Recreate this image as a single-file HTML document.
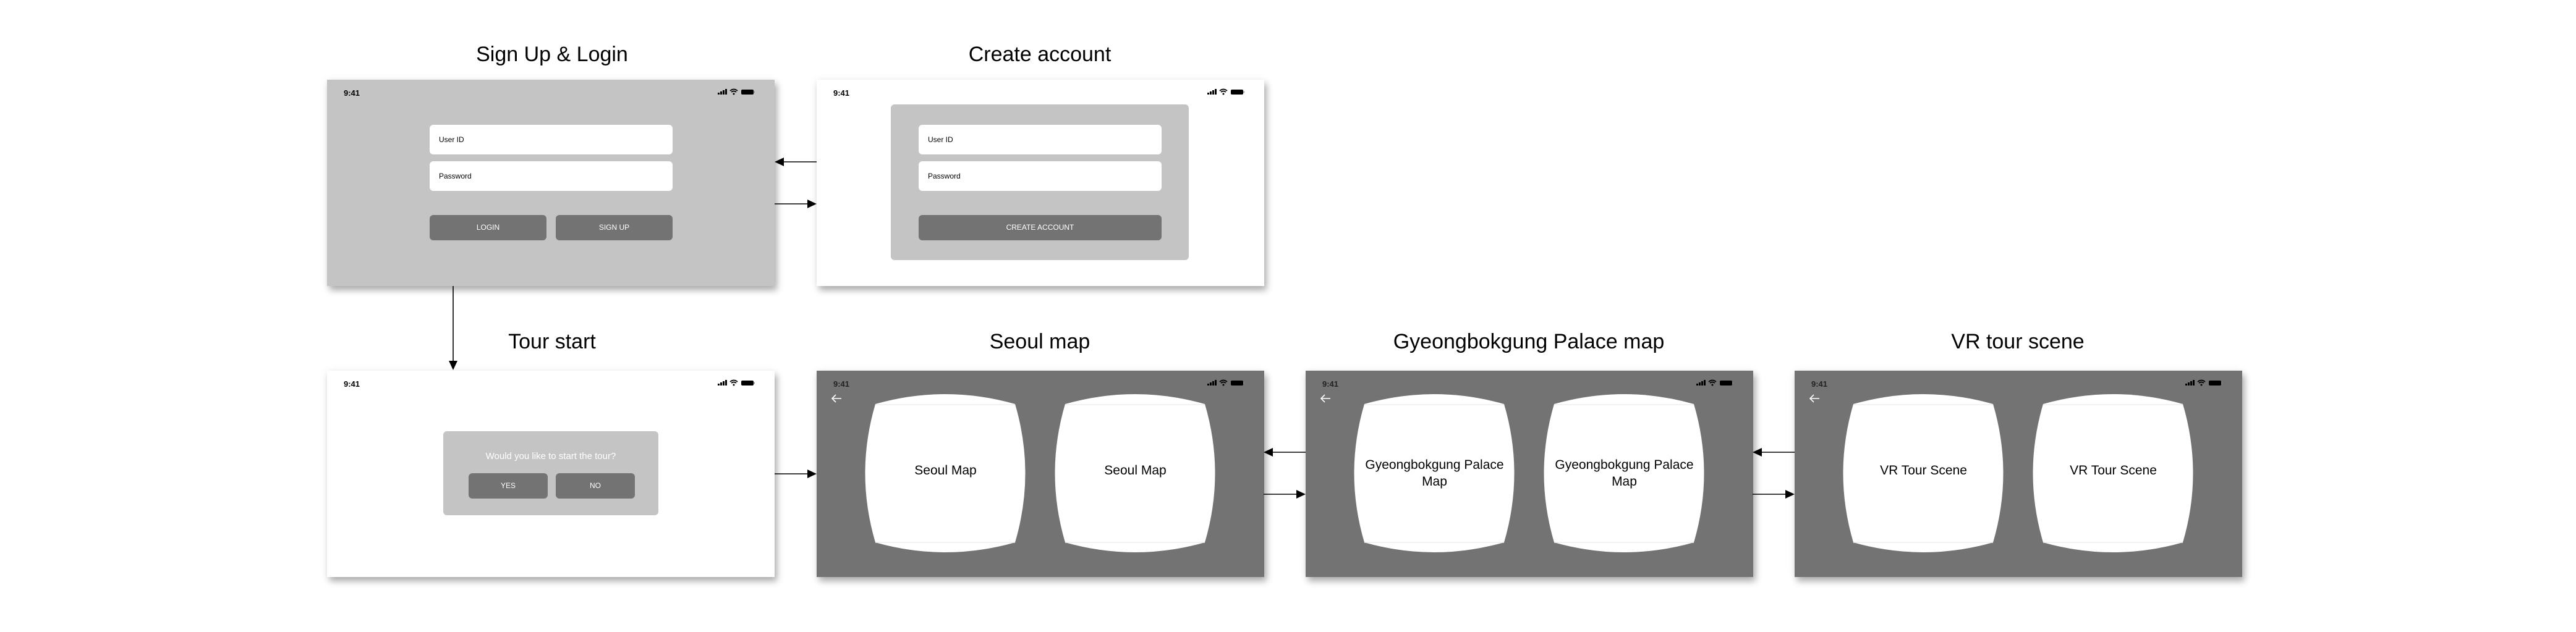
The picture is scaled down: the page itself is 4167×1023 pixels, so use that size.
<!DOCTYPE html>
<html><head><meta charset="utf-8">
<style>
*{margin:0;padding:0;box-sizing:border-box}
body{width:4167px;height:1023px;background:#fff;position:relative;overflow:hidden;font-family:"Liberation Sans",Arial,sans-serif;color:#000}
.t{position:absolute;font-size:34px;text-align:center;width:800px;line-height:40px}
.f{position:absolute;width:724px;height:334px;box-shadow:4px 7px 10px rgba(0,0,0,.3),0 0 14px rgba(0,0,0,.06)}
.g{background:#c4c4c4}.w{background:#fff}.d{background:#737373}
.tm{position:absolute;left:27px;top:14px;font-size:13px;font-weight:bold}
.d .tm{color:#222}
.ic{position:absolute;left:632px;top:14px}
.in{position:absolute;background:#fff;border-radius:6px;height:48px;width:393px;font-size:12px;padding-left:15px;line-height:48px}
.b{position:absolute;background:#737373;border-radius:6px;height:41px;color:#fff;font-size:12px;text-align:center;line-height:41px}
.lt{position:absolute;top:0;left:0}
.lx{position:absolute;width:257px;font-size:21px;text-align:center;line-height:27px}
</style></head><body>

<div class="t" style="left:493px;top:68px">Sign Up &amp; Login</div>
<div class="t" style="left:1282px;top:68px">Create account</div>
<div class="t" style="left:493px;top:533px">Tour start</div>
<div class="t" style="left:1282px;top:533px">Seoul map</div>
<div class="t" style="left:2073px;top:533px">Gyeongbokgung Palace map</div>
<div class="t" style="left:2864px;top:533px">VR tour scene</div>

<!-- Frame 1 -->
<div class="f g" style="left:529px;top:129px">
 <div class="tm">9:41</div>
 <svg class="ic" width="62" height="12" viewBox="0 0 62 12"><rect x="0" y="7" width="3" height="3" fill="#000"/><rect x="4" y="5" width="3" height="5"/><rect x="8" y="3" width="3" height="7"/><rect x="12" y="1" width="3" height="9"/><path d="M20 4 Q26 -1 32 4 M22 6 Q26 3 30 6" stroke="#000" stroke-width="1.8" fill="none"/><circle cx="26" cy="9" r="1.5"/><rect x="38" y="2" width="20" height="8" rx="2"/><rect x="58.5" y="4.5" width="1.5" height="3" fill="#888"/></svg>
 <div class="in" style="left:166px;top:73px">User ID</div>
 <div class="in" style="left:166px;top:132px">Password</div>
 <div class="b" style="left:166px;top:219px;width:189px">LOGIN</div>
 <div class="b" style="left:370px;top:219px;width:189px">SIGN UP</div>
</div>

<!-- Frame 2 -->
<div class="f w" style="left:1321px;top:129px">
 <div class="tm">9:41</div>
 <svg class="ic" width="62" height="12" viewBox="0 0 62 12"><rect x="0" y="7" width="3" height="3"/><rect x="4" y="5" width="3" height="5"/><rect x="8" y="3" width="3" height="7"/><rect x="12" y="1" width="3" height="9"/><path d="M20 4 Q26 -1 32 4 M22 6 Q26 3 30 6" stroke="#000" stroke-width="1.8" fill="none"/><circle cx="26" cy="9" r="1.5"/><rect x="38" y="2" width="20" height="8" rx="2"/><rect x="58.5" y="4.5" width="1.5" height="3" fill="#888"/></svg>
 <div style="position:absolute;left:120px;top:40px;width:482px;height:252px;background:#c4c4c4;border-radius:6px"></div>
 <div class="in" style="left:165px;top:73px">User ID</div>
 <div class="in" style="left:165px;top:132px">Password</div>
 <div class="b" style="left:165px;top:219px;width:393px">CREATE ACCOUNT</div>
</div>

<!-- Frame 3 -->
<div class="f w" style="left:529px;top:600px">
 <div class="tm">9:41</div>
 <svg class="ic" width="62" height="12" viewBox="0 0 62 12"><rect x="0" y="7" width="3" height="3"/><rect x="4" y="5" width="3" height="5"/><rect x="8" y="3" width="3" height="7"/><rect x="12" y="1" width="3" height="9"/><path d="M20 4 Q26 -1 32 4 M22 6 Q26 3 30 6" stroke="#000" stroke-width="1.8" fill="none"/><circle cx="26" cy="9" r="1.5"/><rect x="38" y="2" width="20" height="8" rx="2"/><rect x="58.5" y="4.5" width="1.5" height="3" fill="#888"/></svg>
 <div style="position:absolute;left:188px;top:98px;width:348px;height:136px;background:#c4c4c4;border-radius:6px">
  <div style="position:absolute;left:0;width:348px;top:32px;text-align:center;color:#fff;font-size:15px">Would you like to start the tour?</div>
  <div class="b" style="left:41px;top:68px;width:128px">YES</div>
  <div class="b" style="left:182px;top:68px;width:128px">NO</div>
 </div>
</div>

<!-- Lens frames -->
<div class="f d" style="left:1321px;top:600px">
 <div class="tm">9:41</div>
 <svg class="ic" width="62" height="12" viewBox="0 0 62 12"><rect x="0" y="7" width="3" height="3"/><rect x="4" y="5" width="3" height="5"/><rect x="8" y="3" width="3" height="7"/><rect x="12" y="1" width="3" height="9"/><path d="M20 4 Q26 -1 32 4 M22 6 Q26 3 30 6" stroke="#000" stroke-width="1.8" fill="none"/><circle cx="26" cy="9" r="1.5"/><rect x="38" y="2" width="20" height="8" rx="2"/><rect x="58.5" y="4.5" width="1.5" height="3" fill="#888"/></svg>
 <svg class="lt" width="724" height="334"><path d="M40 45 H25 M31 39 L25 45 L31 51" stroke="#fff" stroke-width="1.6" fill="none"/>
  <g transform="translate(80,38)"><path d="M15,16 Q128,-16 241,16 Q274,128 241,240 Q128,272 15,240 Q-18,128 15,16Z" fill="#fff"/><path d="M15,17H241M15,240H241" stroke="#eee" stroke-width="1.5"/></g>
  <g transform="translate(387,38)"><path d="M15,16 Q128,-16 241,16 Q274,128 241,240 Q128,272 15,240 Q-18,128 15,16Z" fill="#fff"/><path d="M15,17H241M15,240H241" stroke="#eee" stroke-width="1.5"/></g></svg>
 <div class="lx" style="left:80px;top:148px">Seoul Map</div>
 <div class="lx" style="left:387px;top:148px">Seoul Map</div>
</div>

<div class="f d" style="left:2112px;top:600px">
 <div class="tm">9:41</div>
 <svg class="ic" width="62" height="12" viewBox="0 0 62 12"><rect x="0" y="7" width="3" height="3"/><rect x="4" y="5" width="3" height="5"/><rect x="8" y="3" width="3" height="7"/><rect x="12" y="1" width="3" height="9"/><path d="M20 4 Q26 -1 32 4 M22 6 Q26 3 30 6" stroke="#000" stroke-width="1.8" fill="none"/><circle cx="26" cy="9" r="1.5"/><rect x="38" y="2" width="20" height="8" rx="2"/><rect x="58.5" y="4.5" width="1.5" height="3" fill="#888"/></svg>
 <svg class="lt" width="724" height="334"><path d="M40 45 H25 M31 39 L25 45 L31 51" stroke="#fff" stroke-width="1.6" fill="none"/>
  <g transform="translate(80,38)"><path d="M15,16 Q128,-16 241,16 Q274,128 241,240 Q128,272 15,240 Q-18,128 15,16Z" fill="#fff"/><path d="M15,17H241M15,240H241" stroke="#eee" stroke-width="1.5"/></g>
  <g transform="translate(387,38)"><path d="M15,16 Q128,-16 241,16 Q274,128 241,240 Q128,272 15,240 Q-18,128 15,16Z" fill="#fff"/><path d="M15,17H241M15,240H241" stroke="#eee" stroke-width="1.5"/></g></svg>
 <div class="lx" style="left:80px;top:139px">Gyeongbokgung Palace<br>Map</div>
 <div class="lx" style="left:387px;top:139px">Gyeongbokgung Palace<br>Map</div>
</div>

<div class="f d" style="left:2903px;top:600px">
 <div class="tm">9:41</div>
 <svg class="ic" width="62" height="12" viewBox="0 0 62 12"><rect x="0" y="7" width="3" height="3"/><rect x="4" y="5" width="3" height="5"/><rect x="8" y="3" width="3" height="7"/><rect x="12" y="1" width="3" height="9"/><path d="M20 4 Q26 -1 32 4 M22 6 Q26 3 30 6" stroke="#000" stroke-width="1.8" fill="none"/><circle cx="26" cy="9" r="1.5"/><rect x="38" y="2" width="20" height="8" rx="2"/><rect x="58.5" y="4.5" width="1.5" height="3" fill="#888"/></svg>
 <svg class="lt" width="724" height="334"><path d="M40 45 H25 M31 39 L25 45 L31 51" stroke="#fff" stroke-width="1.6" fill="none"/>
  <g transform="translate(80,38)"><path d="M15,16 Q128,-16 241,16 Q274,128 241,240 Q128,272 15,240 Q-18,128 15,16Z" fill="#fff"/><path d="M15,17H241M15,240H241" stroke="#eee" stroke-width="1.5"/></g>
  <g transform="translate(387,38)"><path d="M15,16 Q128,-16 241,16 Q274,128 241,240 Q128,272 15,240 Q-18,128 15,16Z" fill="#fff"/><path d="M15,17H241M15,240H241" stroke="#eee" stroke-width="1.5"/></g></svg>
 <div class="lx" style="left:80px;top:148px">VR Tour Scene</div>
 <div class="lx" style="left:387px;top:148px">VR Tour Scene</div>
</div>

<!-- Arrows -->
<svg style="position:absolute;left:0;top:0" width="4167" height="1023">
 <g stroke="#000" stroke-width="1.6">
  <line x1="1321" y1="262" x2="1266" y2="262"/><line x1="1253" y1="330" x2="1308" y2="330"/>
  <line x1="733" y1="463" x2="733" y2="586"/>
  <line x1="1253" y1="767" x2="1308" y2="767"/>
  <line x1="2112" y1="732" x2="2058" y2="732"/><line x1="2044" y1="800" x2="2099" y2="800"/>
  <line x1="2903" y1="732" x2="2849" y2="732"/><line x1="2835" y1="800" x2="2890" y2="800"/>
 </g>
 <g fill="#000">
  <path d="M1253 262 L1268 255 L1268 269Z"/><path d="M1321 330 L1306 323 L1306 337Z"/>
  <path d="M733 599 L726 584 L740 584Z"/>
  <path d="M1321 767 L1306 760 L1306 774Z"/>
  <path d="M2044 732 L2059 725 L2059 739Z"/><path d="M2112 800 L2097 793 L2097 807Z"/>
  <path d="M2835 732 L2850 725 L2850 739Z"/><path d="M2903 800 L2888 793 L2888 807Z"/>
 </g>
</svg>
</body></html>
